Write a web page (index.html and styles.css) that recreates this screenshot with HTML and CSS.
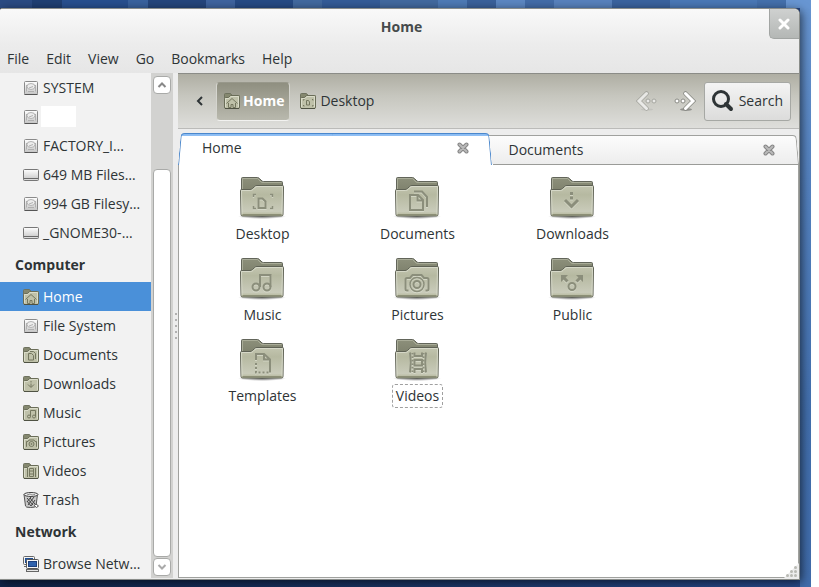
FILE: index.html
```
<!DOCTYPE html>
<html lang="en">
<head>
    <meta charset="UTF-8">
    <title>Home</title>
    <link rel="stylesheet" href="styles.css">
</head>
<body>
    <!-- shared icons -->
    <svg class="sprite" aria-hidden="true">
        <defs>
            <linearGradient id="g-back" x1="0" y1="0" x2="0" y2="1">
                <stop offset="0" stop-color="#8d907b"/>
                <stop offset="1" stop-color="#7b7e6a"/>
            </linearGradient>
            <linearGradient id="g-front" x1="0" y1="0" x2="0" y2="1">
                <stop offset="0" stop-color="#c3c5b0"/>
                <stop offset=".3" stop-color="#b6b9a1"/>
                <stop offset=".85" stop-color="#c9cbba"/>
                <stop offset="1" stop-color="#b0b394"/>
            </linearGradient>
            <linearGradient id="g-metal" x1="0" y1="0" x2="0" y2="1">
                <stop offset="0" stop-color="#fff"/>
                <stop offset="1" stop-color="#c4c4c4"/>
            </linearGradient>
            <radialGradient id="g-shadow">
                <stop offset="0" stop-color="#000" stop-opacity=".6"/>
                <stop offset="1" stop-color="#000" stop-opacity="0"/>
            </radialGradient>
        </defs>

        <symbol id="folder" viewBox="0 0 48 48">
            <ellipse cx="24" cy="42.5" rx="24" ry="2.5" fill="url(#g-shadow)"/>
            <path d="M3.5 20V4.500q0-1 1-1H19.500q1 0 2 1l2.500 2.500q.7.500 1.500.500H43.500q1 0 1 1V20z" fill="url(#g-back)" stroke="#62655a"/>
            <path d="M4.500 15V4.500H19.500L23 8Q24 8.500 25 8.500H43.500" fill="none" stroke="#a9ac98"/>
            <path d="M2.500 16.500q0-1 1-1H12q1.500 0 2.500-1l2-2q1-1 2.500-1H44.500q1 0 1 1L45 40.500q0 1.500-1.500 1.500H4.500Q3 42 3 40.500z" fill="url(#g-front)" stroke="#5f6255"/>
            <path d="M4 40.500L3.500 16.500H12.500q1.500 0 2.500-1l2-2q1-1 2-1H44.500L44 40.500" fill="none" stroke="#dcdecf" stroke-opacity=".8"/>
            <path d="M4.500 40.500H43.500" stroke="#8c8f76" fill="none"/>
        </symbol>

        <symbol id="folder-small" viewBox="0 0 16 16">
            <path d="M.5 13V1.500q0-1 1-1H6q.7 0 1 .5l1 1.500h6.500q1 0 1 1V13z" fill="#85886f" stroke="#6f725f"/>
            <path d="M.5 5.500q0-1 1-1h3L6.500 2.500h8q1 0 1 1V14q0 1.500-1 1.500H1.500q-1 0-1-1.500z" fill="#bfc1a9" stroke="#6a6d58"/>
            <path d="M1.500 14V5.500H5L7 3.500H14.500V14" fill="none" stroke="#dadcc9"/>
            <path d="M1 15.500H15" stroke="#4f5243" fill="none"/>
        </symbol>

        <symbol id="e-desktop" viewBox="0 0 48 48">
            <path d="M20.500 24.500h4l3 3v6.500h-7z" stroke-width="2"/>
            <path d="M15.500 23v-2.500H18M32 20.500h2.500V23M34.500 32v2.500H32M18 34.500h-2.500V32" stroke-width="1.500"/>
        </symbol>
        <symbol id="e-documents" viewBox="0 0 48 48">
            <path d="M17 21h8l5 5v10H17zM24.500 21v5.500H30" stroke-width="2"/>
            <path d="M21 17.500h8l5 5.500v10" stroke-width="2"/>
        </symbol>
        <symbol id="e-downloads" viewBox="0 0 48 48">
            <path d="M23.500 18v3M23.500 22.500v3" stroke-width="3"/>
            <path d="M17 26l6.500 6.500L30 26" stroke-width="3"/>
        </symbol>
        <symbol id="e-music" viewBox="0 0 48 48">
            <circle cx="18" cy="32" r="3.500" stroke-width="2"/>
            <circle cx="29" cy="32" r="3.500" stroke-width="2"/>
            <path d="M22 32V20h10.500v12" stroke-width="2"/>
        </symbol>
        <symbol id="e-pictures" viewBox="0 0 48 48">
            <circle cx="24" cy="29.500" r="7" stroke-width="1.500"/>
            <circle cx="24" cy="29.500" r="3.500" stroke-width="2"/>
            <path d="M15.500 35.500H14q-1.500 0-1.500-1.500V24.500q0-1.500 1.500-1.500h3l2.500-3h9l2.500 3h3q1.500 0 1.500 1.500V34q0 1.500-1.500 1.500h-1.500" stroke-width="2"/>
        </symbol>
        <symbol id="e-public" viewBox="0 0 48 48">
            <circle cx="24" cy="31.500" r="3.500" stroke-width="2"/>
            <path d="M19.500 26.500L15 22M28.500 26.500L33 22" stroke-width="3"/>
            <path class="solid" d="M13 20h7l-7 7zM35 20h-7l7 7z"/>
        </symbol>
        <symbol id="e-templates" viewBox="0 0 48 48">
            <path d="M18 24v-6h8l6 5.500v13M26 18v5.500h6" stroke-width="2"/>
            <path d="M18 27v9.500h13" stroke-width="2" stroke-dasharray="2 2"/>
        </symbol>
        <symbol id="e-videos" viewBox="0 0 48 48">
            <path d="M17 16.500q1.500 10 0 20M33 16.500q-1.500 10 0 20" stroke-width="2"/>
            <path d="M19.500 17v20M30.500 17v20" stroke-width="2" stroke-dasharray="1.500 2"/>
            <path d="M21.500 24h7.500v5.500h-7.500zM21.500 16.500v3.500h7.500v-3.500M21.500 37v-4h7.500v4" stroke-width="2"/>
        </symbol>

        <symbol id="s-home" viewBox="0 0 16 16"><path d="M2.500 10.500L8 5.500l5.500 5M4.500 10v4.500h2.500v-3h2v3h2.500V10"/></symbol>
        <symbol id="s-desktop" viewBox="0 0 16 16"><path d="M3.500 7.500v-1h1M12 6.500h1v1M13 12v1h-1M4.500 13h-1v-1M6.500 7.500h2l1 1.500v3h-3z"/></symbol>
        <symbol id="s-documents" viewBox="0 0 16 16"><path d="M5.500 6.500h3l2 2v4.500h-5zM7 4.500h3.500l2 2V12"/></symbol>
        <symbol id="s-downloads" viewBox="0 0 16 16"><path d="M8 5v1.500M8 7.500v3.500M5 8.500l3 3 3-3"/></symbol>
        <symbol id="s-music" viewBox="0 0 16 16"><path d="M7.500 11.500v-6h5v6"/><circle cx="6" cy="11.500" r="1.500"/><circle cx="11" cy="11.500" r="1.500"/></symbol>
        <symbol id="s-pictures" viewBox="0 0 16 16"><path d="M4 12.500H3.500V7.500H5L6 6h5l1 1.500h1.500v5H13"/><circle cx="8.500" cy="10" r="2.500"/><circle cx="8.500" cy="10" r=".6"/></symbol>
        <symbol id="s-videos" viewBox="0 0 16 16"><path d="M4.500 5v9M12.500 5v9M6.500 5.500h4v2.500h-4v3h4v2.500h-4zM10.500 8v3"/></symbol>

        <symbol id="disk" viewBox="0 0 16 16">
            <rect x="1.500" y="1.500" width="13" height="13" rx="1" fill="url(#g-metal)" stroke="#8a8a8a"/>
            <path d="M1.500 14.500H14.500" stroke="#555"/>
            <ellipse cx="8" cy="6.500" rx="4" ry="3" fill="#ececec" stroke="#b4b4b4"/>
            <path d="M3.500 11.500V5M12.500 11.500V5M5 11.500h6M6 8l4-1.500" stroke="#b0b0b0" fill="none"/>
        </symbol>
        <symbol id="drive" viewBox="0 0 16 16">
            <rect x=".5" y="2.500" width="15" height="11" rx="1" fill="url(#g-metal)" stroke="#777"/>
            <path d="M1 11.500H15" stroke="#6a6a6a"/>
            <path d="M1.500 12.500H14.500" stroke="#ddd"/>
        </symbol>
        <symbol id="trash" viewBox="0 0 16 16">
            <path d="M1 2.500L2.500 14q0 1.500 5 1.500T13 14L14.500 2.500z" fill="#c9c9c9" stroke="#555"/>
            <ellipse cx="8" cy="2.500" rx="7" ry="2" fill="#eee" stroke="#444"/>
            <path d="M4 6l6 7M7 6l5 6M4 9l4 5M11 5l-6 8M8 5l-4 5M12 8l-4 6" stroke="#444" fill="none"/>
            <path d="M4 3l3-1 2 1 3-.5" stroke="#888" fill="none"/>
            <path d="M11 13.500l2-1.500 2.500 2-2 1.500z" fill="#fff" stroke="#555"/>
        </symbol>
        <symbol id="network" viewBox="0 0 16 16">
            <rect x=".5" y=".5" width="11" height="8" rx="1" fill="#f4f4f4" stroke="#666"/>
            <rect x="2" y="2" width="8" height="5" fill="#1f4f95"/>
            <path d="M1 10.500h3.500" stroke="#666"/>
            <rect x="3.500" y="3.500" width="12" height="9" rx="1" fill="#f8f8f8" stroke="#555"/>
            <rect x="5" y="5" width="9" height="6" fill="#1c3f7c"/>
            <rect x="6" y="6" width="7" height="4" fill="#2f62ad"/>
            <rect x="3.500" y="13.500" width="12" height="2" fill="#e8e8e8" stroke="#666"/>
        </symbol>
        <symbol id="tab-close" viewBox="0 0 12 12">
            <path d="M2.500 2.500l7 7M9.500 2.500l-7 7" stroke="#858585" stroke-width="4" stroke-linecap="round"/>
            <path d="M2.500 2.500l7 7M9.500 2.500l-7 7" stroke="#b9b9b9" stroke-width="2" stroke-linecap="round"/>
        </symbol>
    </svg>

    <div class="desktop">
        <div class="window">
            <header class="titlebar">
                <h1 class="title">Home</h1>
                <button class="close" aria-label="Close window">
                    <svg width="12" height="12" viewBox="0 0 12 12"><path d="M2 2l8 8M10 2l-8 8" stroke="#fff" stroke-width="3" stroke-linecap="round"/></svg>
                </button>
            </header>
            <nav class="menubar">
                <button>File</button>
                <button>Edit</button>
                <button>View</button>
                <button>Go</button>
                <button>Bookmarks</button>
                <button>Help</button>
            </nav>

            <div class="panes">
                <aside class="sidebar">
                    <ul class="places">
                        <li><a href="#"><svg class="small"><use href="#disk"/></svg>SYSTEM</a></li>
                        <li><a href="#" aria-label="Volume"><svg class="small"><use href="#disk"/></svg><span class="blank"></span></a></li>
                        <li><a href="#"><svg class="small"><use href="#disk"/></svg>FACTORY_I…</a></li>
                        <li><a href="#"><svg class="small"><use href="#drive"/></svg>649 MB Files…</a></li>
                        <li><a href="#"><svg class="small"><use href="#disk"/></svg>994 GB Filesy…</a></li>
                        <li><a href="#"><svg class="small"><use href="#drive"/></svg>_GNOME30-…</a></li>
                    </ul>
                    <h2>Computer</h2>
                    <ul class="places">
                        <li class="is-active"><a href="#"><svg class="small"><use href="#folder-small"/><use class="mark" href="#s-home"/></svg>Home</a></li>
                        <li><a href="#"><svg class="small"><use href="#disk"/></svg>File System</a></li>
                        <li><a href="#"><svg class="small"><use href="#folder-small"/><use class="mark" href="#s-documents"/></svg>Documents</a></li>
                        <li><a href="#"><svg class="small"><use href="#folder-small"/><use class="mark" href="#s-downloads"/></svg>Downloads</a></li>
                        <li><a href="#"><svg class="small"><use href="#folder-small"/><use class="mark" href="#s-music"/></svg>Music</a></li>
                        <li><a href="#"><svg class="small"><use href="#folder-small"/><use class="mark" href="#s-pictures"/></svg>Pictures</a></li>
                        <li><a href="#"><svg class="small"><use href="#folder-small"/><use class="mark" href="#s-videos"/></svg>Videos</a></li>
                        <li><a href="#"><svg class="small"><use href="#trash"/></svg>Trash</a></li>
                    </ul>
                    <h2>Network</h2>
                    <ul class="places">
                        <li><a href="#"><svg class="small"><use href="#network"/></svg>Browse Netw…</a></li>
                    </ul>
                </aside>

                <div class="scrollbar">
                    <button class="stepper" aria-label="Scroll up"><svg width="10" height="6" viewBox="0 0 10 6"><path d="M1.500 5L5 1.500 8.500 5" stroke="#888" stroke-width="2"/></svg></button>
                    <div class="trough"><div class="thumb"></div></div>
                    <button class="stepper" aria-label="Scroll down"><svg width="10" height="6" viewBox="0 0 10 6"><path d="M1.500 1L5 4.500 8.500 1" stroke="#aaa" stroke-width="2"/></svg></button>
                </div>

                <div class="splitter"><i></i><i></i><i></i><i></i><i></i></div>

                <main class="main">
                    <div class="toolbar">
                        <button class="path-back" aria-label="Scroll path"><svg width="8" height="10" viewBox="0 0 8 10"><path d="M6 1L2 5l4 4" stroke="#2e3436" stroke-width="2"/></svg></button>
                        <button class="path is-active"><svg class="small"><use href="#folder-small"/><use class="mark" href="#s-home"/></svg>Home</button>
                        <button class="path"><svg class="small"><use href="#folder-small"/><use class="mark" href="#s-desktop"/></svg>Desktop</button>
                        <button class="go is-disabled" aria-label="Back">
                            <svg width="22" height="22" viewBox="0 0 22 22">
                                <ellipse cx="11" cy="19.500" rx="6" ry="1" fill="#000" fill-opacity=".1"/>
                                <path d="M10.500 3.500l-7.500 7.500 7.500 7.500" stroke="#8e8f89" stroke-width="4.500" stroke-linecap="round"/>
                                <path d="M10.500 3.500l-7.500 7.500 7.500 7.500" stroke="#fff" stroke-width="3" stroke-linecap="round"/>
                                <circle cx="12" cy="11" r="2" fill="#fff" stroke="#8e8f89"/>
                                <circle cx="18" cy="11" r="2" fill="#fff" stroke="#8e8f89"/>
                            </svg>
                        </button>
                        <button class="go" aria-label="Forward">
                            <svg width="22" height="22" viewBox="0 0 22 22">
                                <ellipse cx="12" cy="19.500" rx="6" ry="1.500" fill="#000" fill-opacity=".3"/>
                                <path d="M11.500 3.500l7.500 7.500-7.500 7.500" stroke="#8a8b85" stroke-width="4.500" stroke-linecap="round"/>
                                <path d="M11.500 3.500l7.500 7.500-7.500 7.500" stroke="#fff" stroke-width="3" stroke-linecap="round"/>
                                <circle cx="3" cy="11" r="2" fill="#fff" stroke="#8a8b85"/>
                                <circle cx="9" cy="11" r="2" fill="#fff" stroke="#8a8b85"/>
                            </svg>
                        </button>
                        <button class="search">
                            <svg width="24" height="24" viewBox="0 0 24 24"><circle cx="10" cy="10" r="7.500" stroke="#2e3436" stroke-width="3"/><path d="M15 15l5 5" stroke="#2e3436" stroke-width="4" stroke-linecap="round"/></svg>
                            Search
                        </button>
                    </div>

                    <div class="tabs">
                        <div class="tab is-active">
                            <button class="tab-name">Home</button>
                            <button class="tab-close" aria-label="Close tab"><svg width="12" height="12"><use href="#tab-close"/></svg></button>
                        </div>
                        <div class="tab">
                            <button class="tab-name">Documents</button>
                            <button class="tab-close" aria-label="Close tab"><svg width="12" height="12"><use href="#tab-close"/></svg></button>
                        </div>
                    </div>

                    <div class="files">
                        <a class="file" href="#"><svg class="big"><use href="#folder"/><use class="glow" href="#e-desktop" y="1"/><use class="mark" href="#e-desktop"/></svg><span>Desktop</span></a>
                        <a class="file" href="#"><svg class="big"><use href="#folder"/><use class="glow" href="#e-documents" y="1"/><use class="mark" href="#e-documents"/></svg><span>Documents</span></a>
                        <a class="file" href="#"><svg class="big"><use href="#folder"/><use class="glow" href="#e-downloads" y="1"/><use class="mark" href="#e-downloads"/></svg><span>Downloads</span></a>
                        <a class="file" href="#"><svg class="big"><use href="#folder"/><use class="glow" href="#e-music" y="1"/><use class="mark" href="#e-music"/></svg><span>Music</span></a>
                        <a class="file" href="#"><svg class="big"><use href="#folder"/><use class="glow" href="#e-pictures" y="1"/><use class="mark" href="#e-pictures"/></svg><span>Pictures</span></a>
                        <a class="file" href="#"><svg class="big"><use href="#folder"/><use class="glow" href="#e-public" y="1"/><use class="mark" href="#e-public"/></svg><span>Public</span></a>
                        <a class="file" href="#"><svg class="big"><use href="#folder"/><use class="glow" href="#e-templates" y="1"/><use class="mark" href="#e-templates"/></svg><span>Templates</span></a>
                        <a class="file is-focused" href="#"><svg class="big"><use href="#folder"/><use class="glow" href="#e-videos" y="1"/><use class="mark" href="#e-videos"/></svg><span>Videos</span></a>
                    </div>
                </main>
            </div>

            <svg class="grip" width="16" height="16" viewBox="0 0 16 16">
                <path d="M0 16L16 0v16z" fill="#ededed"/>
                <g fill="#b9bab4">
                    <circle cx="12.500" cy="4.500" r="1.500"/>
                    <circle cx="8.500" cy="8.500" r="1.500"/><circle cx="12.500" cy="8.500" r="1.500"/>
                    <circle cx="4.500" cy="12.500" r="1.500"/><circle cx="8.500" cy="12.500" r="1.500"/><circle cx="12.500" cy="12.500" r="1.500"/>
                </g>
            </svg>
        </div>
    </div>
</body>
</html>
```

FILE: styles.css
```
* {
    box-sizing: border-box;
}

body {
    margin: 0;
    background: white;
    color: #2e3436;
    font: 14px/20px "Open Sans", "Noto Sans", sans-serif;
}

button {
    border: 0;
    padding: 0;
    background: none;
    color: inherit;
    font: inherit;
}

a {
    color: inherit;
    text-decoration: none;
}

h1, h2, ul {
    margin: 0;
    padding: 0;
    font-size: inherit;
    list-style: none;
}

svg {
    display: block;
    fill: none;
    flex: none;
}

.sprite {
    position: absolute;
    width: 0;
    height: 0;
}

.small {
    width: 16px;
    height: 16px;
}

.big {
    width: 48px;
    height: 48px;
    margin-right: 1px;
}

.mark {
    color: #8b8e7b;
    stroke: #8b8e7b;
}

.small .mark {
    stroke: #74775f;
}

.glow {
    color: transparent;
    stroke: #dddfd2;
    stroke-opacity: .7;
}

.solid {
    fill: currentColor;
    stroke: none;
}

/* desktop */

.desktop {
    display: flex;
    min-height: 100vh;
    margin-right: 8px;
    padding: 8px 11px 7px 0;
    background:
        linear-gradient(to right, #2a4b83 32px, #1f3f73 32px 62px, #28508f 62px 128px, #39629e 128px 148px, #25467c 148px 206px, #3f649f 206px 235px, #264b85 235px 293px, #42699f 293px 322px, #345c98 322px 380px, #42699f 380px 438px, #4e7ab5 438px 467px, #3a619b 467px 496px, #5c87c2 496px 525px, #436ca8 525px 554px, #5882bd 554px 612px, #3a639f 612px 670px, #4a78b6 670px 757px, #4470ac 757px 786px, #6896d2 786px) top / 100% 8px no-repeat,
        linear-gradient(to bottom, #6896d2, #5583c1 30%, #4370ae 70%, #406cab) right / 11px 100% no-repeat,
        linear-gradient(to right, #0f2348, #1a3362 50%, #27498a);
}

.window {
    position: relative;
    display: flex;
    flex-direction: column;
    flex: 1;
    min-width: 0;
    padding-bottom: 1px;
    background: #ededed;
    border: solid #8a8d8a;
    border-width: 1px 1px 1px 0;
    border-radius: 2px 6px 0 0;
    box-shadow: 2px 2px 10px rgba(0, 0, 0, .6);
}

.titlebar {
    display: flex;
    align-items: center;
    justify-content: center;
    height: 35px;
    padding-left: 4px;
    background: linear-gradient(#f9f9f9, #ececec);
    border-radius: 2px 5px 0 0;
}

.title {
    color: #464b4c;
    font-weight: bold;
}

.close {
    position: absolute;
    top: 0;
    right: 0;
    display: flex;
    align-items: center;
    justify-content: center;
    width: 30px;
    height: 30px;
    padding-right: 2px;
    background: linear-gradient(#cfd1d0, #b4b7b5);
    border: solid #a2a5a3;
    border-width: 0 0 1px 1px;
    border-radius: 0 5px 0 5px;
}

.menubar {
    display: flex;
    gap: 17px;
    height: 29px;
    padding: 0 7px;
    background: linear-gradient(#ececec, #e6e6e6);
}

.panes {
    display: flex;
    flex: 1;
}

/* sidebar */

.sidebar {
    width: 151px;
    background: #f2f2f2;
    white-space: nowrap;
    overflow: hidden;
}

.sidebar h2 {
    padding: 0 15px;
    line-height: 35px;
}

.places a {
    display: flex;
    align-items: center;
    gap: 4px;
    height: 29px;
    padding-left: 23px;
}

.places .is-active {
    background: #4a90d9;
    color: white;
}

.blank {
    width: 35px;
    height: 21px;
    margin-left: -2px;
    background: white;
}

.scrollbar {
    display: flex;
    flex-direction: column;
    gap: 1px;
    width: 22px;
    padding: 3px 2px 2px;
    background: #d2d2d0;
}

.stepper {
    display: flex;
    align-items: center;
    justify-content: center;
    height: 18px;
    background: white;
    border: 1px solid #a9aaa8;
    border-radius: 4px;
}

.trough {
    display: flex;
    flex: 1;
    align-items: flex-end;
}

.thumb {
    width: 100%;
    height: 84%;
    background: white;
    border: 1px solid #a9aaa8;
    border-radius: 4px;
}

.splitter {
    display: flex;
    flex-direction: column;
    align-items: center;
    justify-content: center;
    gap: 4px;
    width: 5px;
}

.splitter i {
    width: 2px;
    height: 2px;
    background: #b0b0b0;
}

/* main pane */

.main {
    display: flex;
    flex-direction: column;
    flex: 1;
    min-width: 0;
}

.toolbar {
    display: flex;
    align-items: center;
    height: 56px;
    padding: 0 8px 0 12px;
    background: linear-gradient(#afaea3, #c6c6be 40%, #dededb);
    border-top: 1px solid #8b8c87;
    border-bottom: 1px solid #bbbbb9;
}

.path-back {
    display: flex;
    justify-content: center;
    width: 19px;
    margin-right: 8px;
}

.path {
    display: flex;
    align-items: center;
    gap: 4px;
    height: 39px;
    margin-right: 4px;
    padding: 0 5px;
    border: 1px solid transparent;
    border-radius: 4px;
}

.path.is-active {
    gap: 3px;
    margin-left: -1px;
    padding: 0 5px 0 7px;
    background: linear-gradient(#8f8f80, #b9b9ae);
    border-color: #98988b #d5d5cf #f2f2f0;
    color: white;
    font-weight: bold;
}

.go {
    margin-right: 16px;
}

.go.is-disabled {
    margin-left: auto;
    opacity: .6;
}

.go + .search {
    margin-left: -8px;
}

.search {
    display: flex;
    align-items: center;
    gap: 4px;
    height: 39px;
    padding: 0 7px 0 6px;
    background: linear-gradient(#f4f4f4, #dcdcdb);
    border: 1px solid #a6a8a4;
    border-radius: 3px;
}

.tabs {
    display: flex;
    align-items: flex-end;
    padding-top: 4px;
}

.tab {
    position: relative;
    display: flex;
    flex: 1;
    align-items: center;
    justify-content: space-between;
    height: 30px;
    padding: 0 24px 0 20px;
    border-bottom: 1px solid #9a9b98;
}

/* slanted tab sides: two skewed halves */
.tab::before,
.tab::after {
    content: "";
    position: absolute;
    top: 0;
    bottom: 0;
    background: linear-gradient(#fcfcfc, #ededed);
    border-top: 1px solid #a0a19e;
}

.tab::before {
    left: 0;
    right: 50%;
}

.tab::after {
    left: 50%;
    right: 0;
    border-right: 1px solid #a0a19e;
    border-radius: 0 4px 0 0;
    transform: skewX(5deg);
    transform-origin: bottom;
}

.tab.is-active {
    height: 32px;
    margin-right: -4px;
    padding: 0 24px 2px;
    border-bottom-color: white;
    z-index: 1;
}

.tab.is-active::before,
.tab.is-active::after {
    bottom: -1px;
    background: linear-gradient(#8abcf3 2px, white 2px);
    border: 1px solid #4a87cc;
    border-bottom: 0;
}

.tab.is-active::before {
    border-right: 0;
    border-radius: 4px 0 0 0;
    transform: skewX(-5deg);
    transform-origin: bottom;
}

.tab.is-active::after {
    border-left: 0;
}

.tab-name,
.tab-close {
    position: relative;
    z-index: 1;
}

.files {
    display: grid;
    grid-template-columns: repeat(auto-fill, 155px);
    align-content: start;
    gap: 9px 0;
    flex: 1;
    padding: 9px 6px;
    background: white;
    border: solid #a0a19e;
    border-width: 0 1px 1px;
}

.file {
    display: flex;
    flex-direction: column;
    align-items: center;
}

.file span {
    padding: 1px 3px;
    border: 1px solid transparent;
    border-radius: 3px;
}

.file.is-focused span {
    border: 1px dashed #a0a0a0;
}

.grip {
    position: absolute;
    right: 0;
    bottom: 0;
}
```
